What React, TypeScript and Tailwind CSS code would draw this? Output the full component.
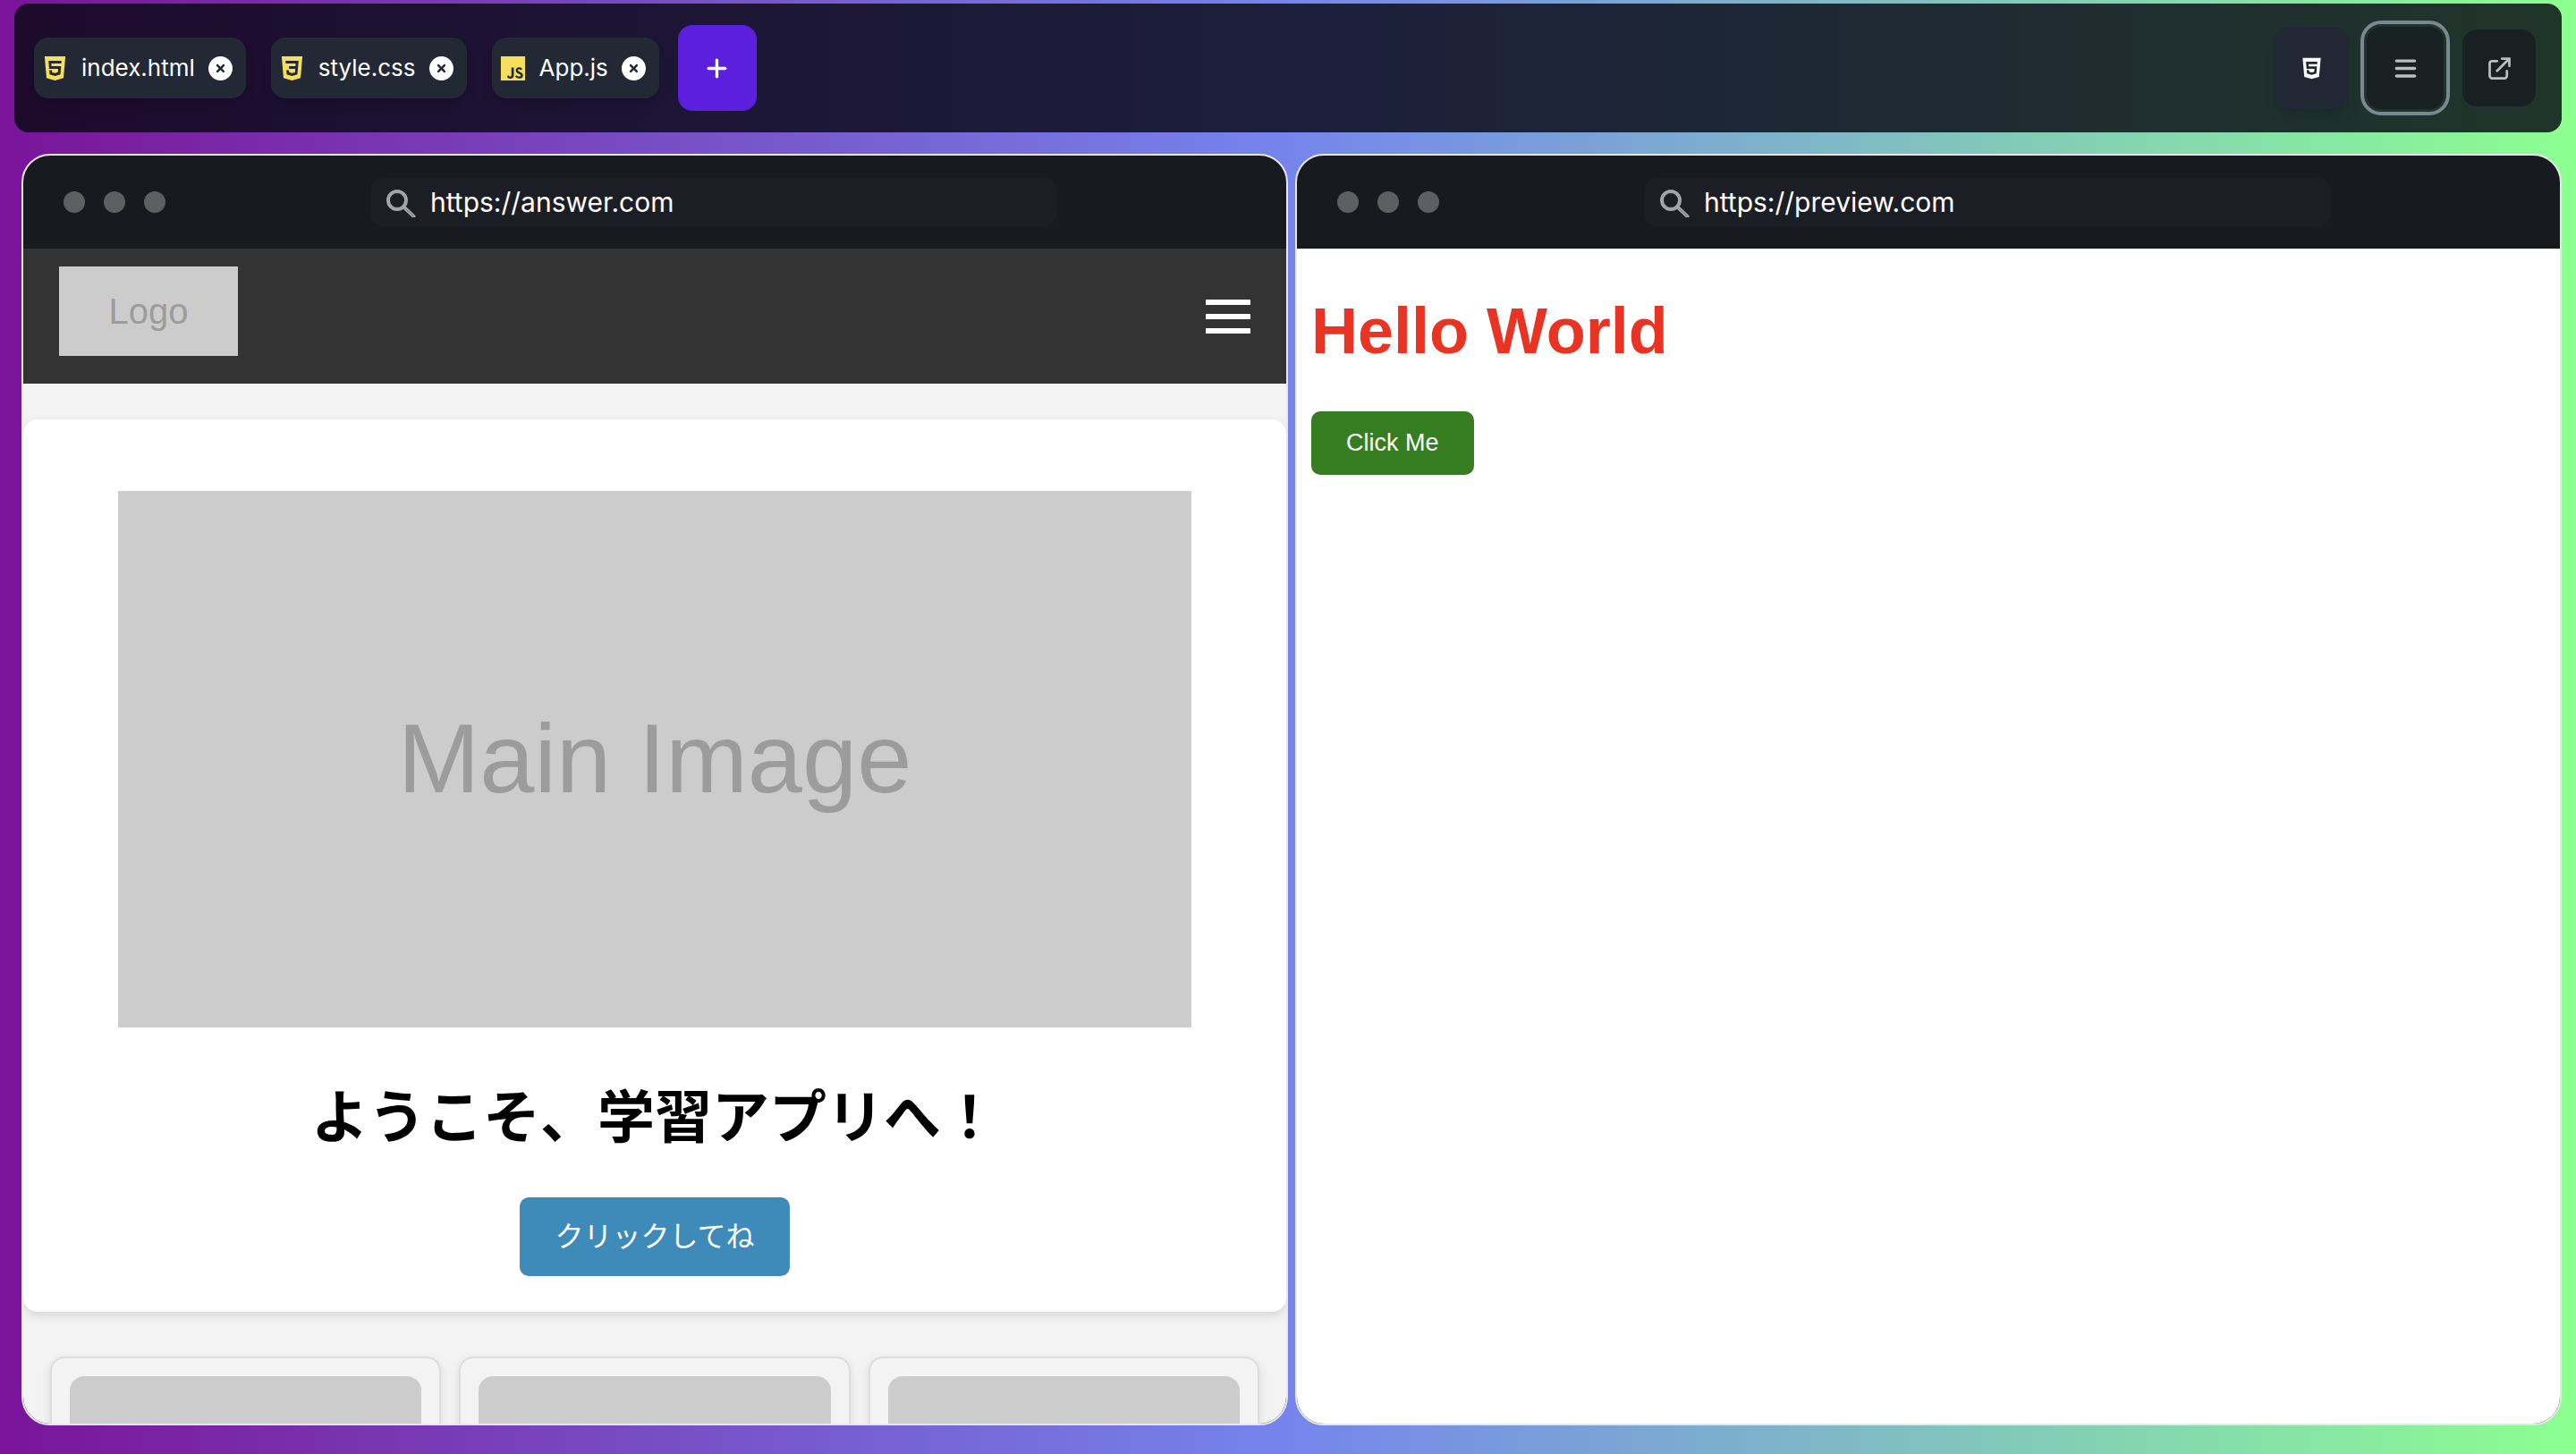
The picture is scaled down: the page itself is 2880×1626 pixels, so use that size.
import type { ReactNode } from "react";
import { IoLogoHtml5, IoLogoCss3, IoLogoJavascript } from "react-icons/io5";
import { FaBars, FaCircleXmark, FaPlus } from "react-icons/fa6";
import { HiOutlineExternalLink } from "react-icons/hi";

const tabs = [
  { name: "index.html", Icon: IoLogoHtml5 },
  { name: "style.css", Icon: IoLogoCss3 },
  { name: "App.js", Icon: IoLogoJavascript },
];

function FileTabs() {
  return (
    <div className="flex items-center gap-7">
      {tabs.map(({ name, Icon }) => (
        <div
          key={name}
          className="flex h-[68px] items-center rounded-2xl bg-[#222935] pr-[15px] pl-2 text-white shadow-lg"
        >
          <button type="button" className="flex items-center gap-[14px] text-[26px] leading-9 font-normal">
            <Icon className="size-[31px] text-[#f7df5e]" />
            {name}
          </button>
          <button type="button" aria-label={`Close ${name}`} className="ml-[15px]">
            <FaCircleXmark className="size-[27px]" />
          </button>
        </div>
      ))}
    </div>
  );
}

function Toolbar() {
  return (
    <header className="mx-4 mt-1 flex h-36 items-center rounded-2xl bg-[rgba(8,8,20,0.82)] pr-[29px] pl-[22px]">
      <FileTabs />
      <button
        type="button"
        aria-label="Add file"
        className="ml-[21px] flex h-24 w-[88px] items-center justify-center rounded-2xl bg-[#5b1fdd] text-white"
      >
        <FaPlus className="size-[27px]" />
      </button>
      <div className="ml-auto flex items-center gap-[21px]">
        <button
          type="button"
          aria-label="Files"
          className="flex h-[92px] w-[82px] items-center justify-center rounded-2xl bg-[#222735] text-white shadow-lg"
        >
          <IoLogoHtml5 className="size-[27px]" />
        </button>
        <button
          type="button"
          aria-label="Menu"
          className="flex h-[92px] w-[86px] items-center justify-center rounded-2xl bg-[#192022] text-[#b9bdbd] outline-4 outline-offset-3 outline-[#7c888f]"
        >
          <FaBars className="size-[27px]" />
        </button>
        <button
          type="button"
          aria-label="Open in new window"
          className="flex h-[86px] w-[82px] items-center justify-center rounded-2xl bg-[#192022] text-[#b9bdbd]"
        >
          <HiOutlineExternalLink className="size-[33px]" />
        </button>
      </div>
    </header>
  );
}

function BrowserWindow({ url, children }: { url: string; children: ReactNode }) {
  return (
    <section className="flex min-w-0 flex-1 flex-col overflow-hidden rounded-[32px] border-2 border-[#e5e7eb] bg-[#171a1e]">
      <div className="flex h-[104px] shrink-0 items-center pl-[45px]">
        <div className="flex gap-[21px]">
          <span className="size-6 rounded-full bg-[#5e5f62]" />
          <span className="size-6 rounded-full bg-[#5e5f62]" />
          <span className="size-6 rounded-full bg-[#5e5f62]" />
        </div>
        <label className="ml-[229px] flex h-14 w-3xl items-center rounded-2xl bg-[#1c1e26] pl-[17px]">
          <svg viewBox="0 0 34 34" className="size-[34px] shrink-0" fill="none" stroke="#a3a4a6">
            <circle cx="13" cy="15" r="10" strokeWidth="4" />
            <path d="M21.5 23.500L31.500 33" strokeWidth="4" strokeLinecap="round" />
            <path d="M23 25L31 32.500" stroke="#77797d" strokeWidth="1" />
          </svg>
          <input
            type="text"
            aria-label="Address"
            defaultValue={url}
            className="ml-4 min-w-0 flex-1 bg-transparent text-[30px] leading-10 text-white outline-none"
          />
        </label>
      </div>
      {children}
    </section>
  );
}

function AnswerPage() {
  return (
    <div className="min-h-0 flex-1 overflow-hidden bg-[#f3f3f3] font-['Liberation_Sans','Noto_Sans_CJK_JP',sans-serif]">
      <div className="flex items-center justify-between bg-[#333] px-10 pt-5 pb-[31px]">
        <div
          role="img"
          aria-label="Logo"
          className="flex h-[100px] w-[200px] items-center justify-center bg-[#ccc] text-[40px] text-[#9c9c9c]"
        >
          Logo
        </div>
        <button type="button" aria-label="Open navigation" className="mt-[11px] flex flex-col gap-[10px]">
          <span className="h-[6px] w-[50px] bg-white" />
          <span className="h-[6px] w-[50px] bg-white" />
          <span className="h-[6px] w-[50px] bg-white" />
        </button>
      </div>
      <div className="mt-10 flex flex-col items-center rounded-2xl bg-white pt-20 pb-10 shadow-[0_4px_12px_rgba(0,0,0,0.12)]">
        <div
          role="img"
          aria-label="Main Image"
          className="flex aspect-[2/1] w-[85%] items-center justify-center bg-[#ccc] pb-1 text-[110px] text-[#9c9c9c]"
        >
          Main Image
        </div>
        <h1 className="mt-[53px] text-[64px] leading-24 font-bold text-black">ようこそ、学習アプリへ！</h1>
        <button
          type="button"
          className="mt-[41px] rounded-[10px] bg-[#3e8bb9] px-[39px] py-5 text-[32px] leading-12 text-white"
        >
          クリックしてね
        </button>
      </div>
      <div className="mt-[50px] grid grid-cols-3 gap-5 px-[30px]">
        {[1, 2, 3].map((n) => (
          <div
            key={n}
            className="rounded-2xl border-2 border-[#ddd] bg-[#f3f3f3] p-5 shadow-[0_4px_12px_rgba(0,0,0,0.1)]"
          >
            <div className="aspect-[3/2] rounded-2xl bg-[#ccc]" />
          </div>
        ))}
      </div>
    </div>
  );
}

function PreviewPage() {
  return (
    <div className="min-h-0 flex-1 bg-white px-4 pt-[50px] font-['Liberation_Sans',sans-serif]">
      <h1 className="text-[72px] leading-[84px] font-bold text-[#e93323]">Hello World</h1>
      <button
        type="button"
        className="mt-12 rounded-[10px] bg-[#367d22] px-[39px] py-5 text-[27px] leading-[31px] text-white"
      >
        Click Me
      </button>
    </div>
  );
}

export default function App() {
  return (
    <div className="flex h-screen flex-col bg-linear-to-r/srgb from-[#7a149a] via-[#7585ed] to-[#8cff90] font-['Inter',sans-serif]">
      <Toolbar />
      <main className="flex min-h-0 flex-1 gap-2 pt-6 pr-4 pb-8 pl-6">
        <BrowserWindow url="https://answer.com">
          <AnswerPage />
        </BrowserWindow>
        <BrowserWindow url="https://preview.com">
          <PreviewPage />
        </BrowserWindow>
      </main>
    </div>
  );
}
